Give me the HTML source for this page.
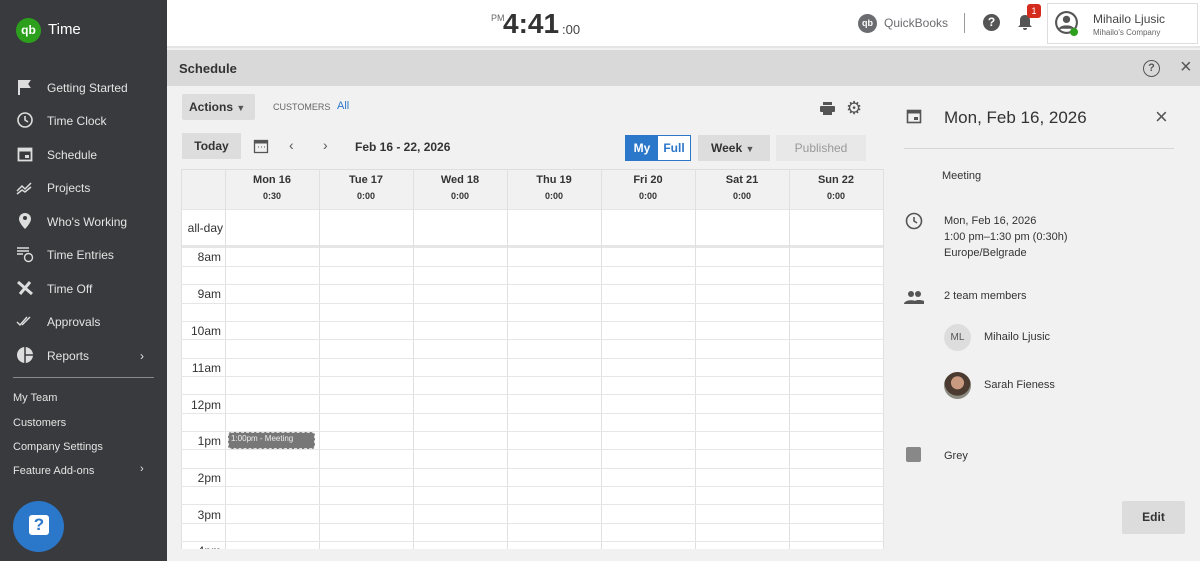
<!DOCTYPE html>
<html><head><meta charset="utf-8"><style>
*{box-sizing:border-box;margin:0;padding:0}
body{width:1200px;height:561px;overflow:hidden;font-family:"Liberation Sans",sans-serif;background:#f1f1f1;position:relative;color:#333}
.a{position:absolute}
#side{left:0;top:0;width:167px;height:561px;background:#393a3d;color:#e8e8e8}
.ni{position:absolute;left:0;width:167px;font-size:12px;color:#e4e4e4}
.ni .ic{position:absolute;left:16px;top:-3px;width:18px;height:18px}
.ni span{position:absolute;left:47px;top:0}
.sm{position:absolute;left:13px;font-size:11px;color:#e4e4e4}
#top{left:167px;top:0;width:1033px;height:48px;background:#fff;border-bottom:2px solid #e4e4e4}
.hb{font-size:11px;font-weight:bold;color:#333;text-align:center}
.vl{position:absolute;top:169px;width:1px;height:380px;background:#e0e0e0}
.hl{position:absolute;left:181px;width:703px;height:1px;background:#e6e6e6}
.tl{position:absolute;left:181px;width:40px;text-align:right;font-size:12px;color:#333}
</style></head><body>
<div id="side" class="a">
 <div class="a" style="left:16px;top:18px;width:25px;height:25px;border-radius:50%;background:#2ca01c;color:#fff;font-size:12px;font-weight:bold;text-align:center;line-height:25px">qb</div>
 <div class="a" style="left:48px;top:21px;font-size:15px;color:#fff">Time</div>
 <div class="ni" style="top:81px"><svg class="ic" viewBox="0 0 18 18"><path d="M3 2v15M3 3h10l-2 3 2 3H3" fill="#ddd" stroke="#ddd" stroke-width="2"/></svg><span>Getting Started</span></div>
 <div class="ni" style="top:114px"><svg class="ic" viewBox="0 0 18 18"><circle cx="9" cy="9" r="7" fill="none" stroke="#ddd" stroke-width="1.6"/><path d="M9 5v4l3 2" fill="none" stroke="#ddd" stroke-width="1.6"/></svg><span>Time Clock</span></div>
 <div class="ni" style="top:148px"><svg class="ic" viewBox="0 0 18 18"><rect x="2.5" y="3.5" width="13" height="12" fill="none" stroke="#ddd" stroke-width="1.8"/><rect x="2.5" y="3.5" width="13" height="3" fill="#ddd"/><rect x="9" y="10" width="4" height="3" fill="#ddd"/></svg><span>Schedule</span></div>
 <div class="ni" style="top:181px"><svg class="ic" viewBox="0 0 18 18"><path d="M1 13l5-5 3 3 6-6M1 16l5-4 3 2 6-5" fill="none" stroke="#ddd" stroke-width="1.5"/></svg><span>Projects</span></div>
 <div class="ni" style="top:215px"><svg class="ic" viewBox="0 0 18 18"><path d="M9 1a6 6 0 0 0-6 6c0 4 6 10 6 10s6-6 6-10a6 6 0 0 0-6-6z" fill="#ddd"/><circle cx="9" cy="6" r="2" fill="#393a3d"/></svg><span>Who's Working</span></div>
 <div class="ni" style="top:248px"><svg class="ic" viewBox="0 0 18 18"><path d="M1 3h12M1 6h12M1 9h6" stroke="#ddd" stroke-width="1.6"/><circle cx="12.5" cy="12.5" r="4" fill="none" stroke="#ddd" stroke-width="1.4"/></svg><span>Time Entries</span></div>
 <div class="ni" style="top:282px"><svg class="ic" viewBox="0 0 18 18"><path d="M2 3l14 12M14 3L4 15" stroke="#ddd" stroke-width="3"/></svg><span>Time Off</span></div>
 <div class="ni" style="top:315px"><svg class="ic" viewBox="0 0 18 18"><path d="M1 10l3 3 7-8M6 13l8-8" fill="none" stroke="#ddd" stroke-width="1.4"/></svg><span>Approvals</span></div>
 <div class="ni" style="top:349px"><svg class="ic" viewBox="0 0 18 18"><circle cx="9" cy="9" r="8" fill="#ddd"/><path d="M9 1v16M9 9h8" stroke="#393a3d" stroke-width="1.5"/></svg><span>Reports</span><span style="left:140px">›</span></div>
 <div class="a" style="left:13px;top:377px;width:141px;height:1px;background:#888"></div>
 <div class="sm" style="top:392px">My Team</div>
 <div class="sm" style="top:417px">Customers</div>
 <div class="sm" style="top:441px">Company Settings</div>
 <div class="sm" style="top:465px">Feature Add-ons</div>
 <div class="sm" style="top:463px;left:140px">›</div>
 <div class="a" style="left:13px;top:501px;width:51px;height:51px;border-radius:50%;background:#2b77c9"><div class="a" style="left:16px;top:14px;width:20px;height:20px;background:#fff;border-radius:3px;color:#2b77c9;font-weight:bold;font-size:17px;text-align:center;line-height:20px">?</div></div>
</div>
<div id="top" class="a">
 <div class="a" style="left:324px;top:13px;font-size:9px;color:#666">PM</div>
 <div class="a" style="left:336px;top:8px;font-size:28px;font-weight:bold;color:#333">4:41</div>
 <div class="a" style="left:395px;top:22px;font-size:13px;color:#444">:00</div>
 <div class="a" style="left:691px;top:14px;width:19px;height:19px;border-radius:50%;background:#6b6c70;color:#fff;font-size:9px;font-weight:bold;text-align:center;line-height:19px">qb</div>
 <div class="a" style="left:717px;top:16px;font-size:12px;color:#6b6c70">QuickBooks</div>
 <div class="a" style="left:797px;top:13px;width:1px;height:20px;background:#999"></div>
 <div class="a" style="left:816px;top:14px;width:17px;height:17px;border-radius:50%;background:#555;color:#fff;font-size:12px;font-weight:bold;text-align:center;line-height:17px">?</div>
 <svg class="a" style="left:850px;top:13px" width="16" height="18" viewBox="0 0 16 18"><path d="M8 2c-3 0-5 2-5 5v5l-2 2h14l-2-2V7c0-3-2-5-5-5zM6 15h4a2 2 0 0 1-4 0z" fill="#555"/></svg>
 <div class="a" style="left:860px;top:4px;width:14px;height:14px;border-radius:3px;background:#d52b1e;color:#fff;font-size:9px;text-align:center;line-height:14px">1</div>
 <div class="a" style="left:880px;top:3px;width:151px;height:41px;border:1px solid #ddd;background:#fff"></div>
 <svg class="a" style="left:887px;top:10px" width="25" height="25" viewBox="0 0 24 24"><circle cx="12" cy="12" r="11" fill="#555"/><circle cx="12" cy="12" r="9" fill="#fff"/><circle cx="12" cy="9" r="3.5" fill="#555"/><path d="M5.5 18c2-3 11-3 13 0" fill="#555" stroke="#555" stroke-width="2"/></svg>
 <div class="a" style="left:903px;top:28px;width:8px;height:8px;border-radius:50%;background:#2ca01c"></div>
 <div class="a" style="left:926px;top:12px;font-size:12px;color:#444">Mihailo Ljusic</div>
 <div class="a" style="left:926px;top:28px;font-size:8px;color:#666">Mihailo's Company</div>
</div>
<div class="a" style="left:167px;top:50px;width:1033px;height:36px;background:#d9d9d9"></div>
<div class="a" style="left:179px;top:61px;font-size:13px;font-weight:bold;color:#333">Schedule</div>
<div class="a" style="left:1143px;top:60px;width:17px;height:17px;border-radius:50%;border:1.5px solid #555;color:#555;font-size:11px;font-weight:bold;text-align:center;line-height:14px">?</div>
<div class="a" style="left:1180px;top:56px;font-size:20px;color:#555">×</div>
<div class="a" style="left:182px;top:94px;width:73px;height:26px;background:#ddd;border-radius:2px;font-size:12px;font-weight:bold;line-height:26px;padding-left:7px">Actions <span style="font-size:9px;color:#555">▼</span></div>
<div class="a" style="left:273px;top:102px;font-size:9px;color:#666">CUSTOMERS</div>
<div class="a" style="left:337px;top:100px;font-size:11px;color:#2b77c9">All</div>
<svg class="a" style="left:820px;top:102px" width="15" height="14" viewBox="0 0 15 14"><rect x="3" y="0" width="9" height="3" fill="#555"/><rect x="0" y="4" width="15" height="6" rx="1" fill="#555"/><rect x="3" y="8" width="9" height="5" fill="#555"/></svg>
<div class="a" style="left:846px;top:98px;font-size:18px;color:#555">⚙</div>
<div class="a" style="left:182px;top:133px;width:59px;height:26px;background:#ddd;font-size:12px;font-weight:bold;text-align:center;line-height:26px">Today</div>
<svg class="a" style="left:253px;top:138px" width="16" height="16" viewBox="0 0 16 16"><rect x="1.5" y="2.5" width="13" height="12" fill="none" stroke="#555" stroke-width="1.3"/><rect x="1.5" y="2.5" width="13" height="3" fill="#555"/><path d="M5 9h1M8 9h1M11 9h1" stroke="#555"/></svg>
<div class="a" style="left:289px;top:137px;font-size:14px;color:#555">‹</div>
<div class="a" style="left:323px;top:137px;font-size:14px;color:#555">›</div>
<div class="a" style="left:355px;top:140px;font-size:12px;font-weight:bold">Feb 16 - 22, 2026</div>
<div class="a" style="left:625px;top:135px;width:66px;height:26px;border:1px solid #2b77c9;background:#fff"><div style="width:32px;height:24px;background:#2b77c9;color:#fff;font-size:12px;font-weight:bold;text-align:center;line-height:24px;float:left">My</div><div style="float:left;width:32px;color:#2b77c9;font-size:12px;font-weight:bold;text-align:center;line-height:24px">Full</div></div>
<div class="a" style="left:698px;top:135px;width:72px;height:26px;background:#ddd;font-size:12px;font-weight:bold;line-height:26px;padding-left:13px">Week <span style="font-size:9px;color:#555">▼</span></div>
<div class="a" style="left:776px;top:135px;width:90px;height:26px;background:#e8e8e8;font-size:12px;color:#999;text-align:center;line-height:26px">Published</div>
<div class="a" style="left:181px;top:169px;width:703px;height:380px;background:#fff"></div>
<div class="a" style="left:181px;top:169px;width:703px;height:40px;background:#f1f1f1;border-top:1px solid #ddd"></div>
<div class="hl" style="top:209px"></div>
<div class="a" style="left:181px;top:245px;width:703px;height:3px;background:#e6e6e6"></div>
<div class="vl" style="left:181px"></div>
<div class="vl" style="left:225px"></div><div class="vl" style="left:319px"></div><div class="vl" style="left:413px"></div><div class="vl" style="left:507px"></div><div class="vl" style="left:601px"></div><div class="vl" style="left:695px"></div><div class="vl" style="left:789px"></div><div class="vl" style="left:883px"></div>
<div class="a hb" style="left:225px;top:174px;width:94px">Mon 16<div style="font-size:9px;margin-top:5px">0:30</div></div>
<div class="a hb" style="left:319px;top:174px;width:94px">Tue 17<div style="font-size:9px;margin-top:5px">0:00</div></div>
<div class="a hb" style="left:413px;top:174px;width:94px">Wed 18<div style="font-size:9px;margin-top:5px">0:00</div></div>
<div class="a hb" style="left:507px;top:174px;width:94px">Thu 19<div style="font-size:9px;margin-top:5px">0:00</div></div>
<div class="a hb" style="left:601px;top:174px;width:94px">Fri 20<div style="font-size:9px;margin-top:5px">0:00</div></div>
<div class="a hb" style="left:695px;top:174px;width:94px">Sat 21<div style="font-size:9px;margin-top:5px">0:00</div></div>
<div class="a hb" style="left:789px;top:174px;width:94px">Sun 22<div style="font-size:9px;margin-top:5px">0:00</div></div>
<div class="tl" style="top:221px;left:183px">all-day</div>
<div class="hl" style="top:266px"></div><div class="hl" style="top:284px"></div><div class="hl" style="top:303px"></div><div class="hl" style="top:321px"></div><div class="hl" style="top:339px"></div><div class="hl" style="top:358px"></div><div class="hl" style="top:376px"></div><div class="hl" style="top:394px"></div><div class="hl" style="top:413px"></div><div class="hl" style="top:431px"></div><div class="hl" style="top:449px"></div><div class="hl" style="top:468px"></div><div class="hl" style="top:486px"></div><div class="hl" style="top:504px"></div><div class="hl" style="top:523px"></div><div class="hl" style="top:541px"></div>
<div class="tl" style="top:250px">8am</div><div class="tl" style="top:287px">9am</div><div class="tl" style="top:324px">10am</div><div class="tl" style="top:361px">11am</div><div class="tl" style="top:398px">12pm</div><div class="tl" style="top:434px">1pm</div><div class="tl" style="top:471px">2pm</div><div class="tl" style="top:508px">3pm</div><div class="tl" style="top:544px">4pm</div>
<div class="a" style="left:181px;top:549px;width:703px;height:12px;background:#f1f1f1"></div>
<div class="a" style="left:228px;top:432px;width:87px;height:17px;background:#777;border:1px dashed #ddd;border-radius:3px;color:#eee;font-size:8px;padding:1px 2px">1:00pm - Meeting</div>
<svg class="a" style="left:906px;top:108px" width="16" height="16" viewBox="0 0 16 16"><rect x="1.5" y="2.5" width="13" height="12" fill="none" stroke="#555" stroke-width="1.6"/><rect x="1.5" y="2.5" width="13" height="3" fill="#555"/><rect x="8" y="9" width="4" height="3" fill="#555"/></svg>
<div class="a" style="left:944px;top:108px;font-size:17px;color:#333">Mon, Feb 16, 2026</div>
<div class="a" style="left:1155px;top:104px;font-size:22px;color:#555">×</div>
<div class="a" style="left:904px;top:148px;width:270px;height:1px;background:#d6d6d6"></div>
<div class="a" style="left:942px;top:170px;font-size:11px">Meeting</div>
<svg class="a" style="left:905px;top:212px" width="18" height="18" viewBox="0 0 18 18"><circle cx="9" cy="9" r="7.5" fill="none" stroke="#555" stroke-width="1.6"/><path d="M9 5v4l3 2" fill="none" stroke="#555" stroke-width="1.6"/></svg>
<div class="a" style="left:944px;top:213px;font-size:11px;line-height:16px">Mon, Feb 16, 2026<br>1:00 pm–1:30 pm (0:30h)<br>Europe/Belgrade</div>
<svg class="a" style="left:904px;top:290px" width="20" height="14" viewBox="0 0 20 14"><circle cx="7" cy="4" r="3" fill="#555"/><circle cx="14" cy="4" r="3" fill="#555"/><path d="M0 14c0-5 14-5 14 0zM9 14c0-4 6-5 11-3v3z" fill="#555"/></svg>
<div class="a" style="left:944px;top:290px;font-size:11px">2 team members</div>
<div class="a" style="left:944px;top:324px;width:27px;height:27px;border-radius:50%;background:#ddd;font-size:10px;color:#555;text-align:center;line-height:27px">ML</div>
<div class="a" style="left:984px;top:331px;font-size:11px">Mihailo Ljusic</div>
<div class="a" style="left:944px;top:372px;width:27px;height:27px;border-radius:50%;background:radial-gradient(circle at 50% 40%,#c99a80 0 30%,#4a3a30 32% 60%,#8a8a80 62%)"></div>
<div class="a" style="left:984px;top:379px;font-size:11px">Sarah Fieness</div>
<div class="a" style="left:906px;top:447px;width:15px;height:15px;background:#888;border-radius:2px"></div>
<div class="a" style="left:944px;top:450px;font-size:11px">Grey</div>
<div class="a" style="left:1122px;top:501px;width:63px;height:33px;background:#dcdcdc;border-radius:2px;font-size:12px;font-weight:bold;text-align:center;line-height:33px">Edit</div>
</body></html>
